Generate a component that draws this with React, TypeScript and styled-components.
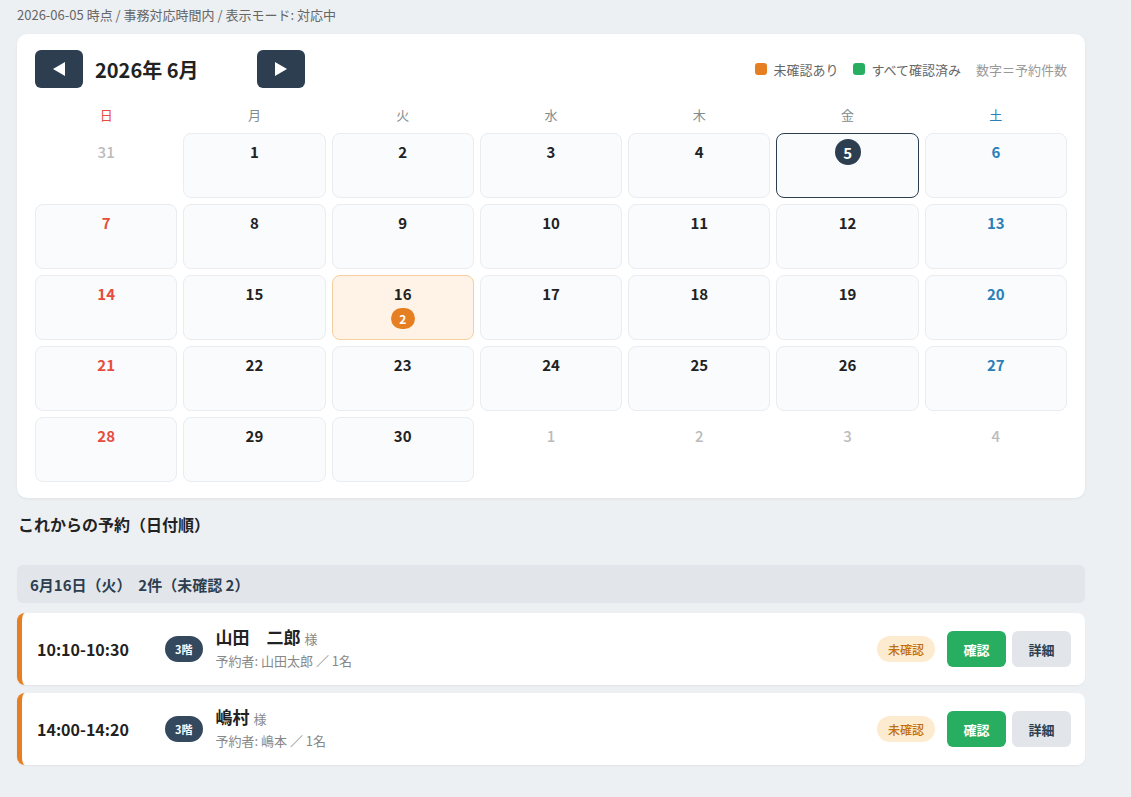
import styled, { createGlobalStyle, css } from "styled-components";

const GlobalStyle = createGlobalStyle`
    * { box-sizing: border-box; }
    body {
        margin: 0;
        background: #edf0f3;
        font-family: "Noto Sans CJK JP", "Noto Sans", sans-serif;
        color: #222;
    }
`;

const Page = styled.div`
    padding: 6px 46px 30px 17px;
`;

const StatusLine = styled.div`
    font-size: 13px;
    color: #666;
    line-height: 18px;
    margin-bottom: 10px;
`;

const CalendarCard = styled.section`
    background: #fff;
    border-radius: 10px;
    padding: 16px 18px;
    box-shadow: 0 1px 3px rgba(0, 0, 0, 0.06);
`;

const CalendarHeader = styled.div`
    display: flex;
    align-items: center;
    height: 38px;
`;

const NavButton = styled.button`
    width: 48px;
    height: 38px;
    border: none;
    border-radius: 6px;
    background: #2c3e50;
    display: flex;
    align-items: center;
    justify-content: center;
    cursor: pointer;
    padding: 0;
`;

const MonthTitle = styled.h2`
    margin: 0 12px;
    width: 150px;
    font-size: 20px;
    font-weight: 700;
    color: #222;
`;

const Legend = styled.div`
    margin-left: auto;
    display: flex;
    align-items: center;
    gap: 15px;
    font-size: 13px;
    color: #666;
`;

const LegendItem = styled.span`
    display: flex;
    align-items: center;
    gap: 6px;
`;

const Swatch = styled.span<{ $color: string }>`
    width: 12px;
    height: 12px;
    border-radius: 3px;
    background: ${(p) => p.$color};
`;

const LegendNote = styled.span`
    color: #999;
`;

const WeekRow = styled.div`
    display: grid;
    grid-template-columns: repeat(7, 1fr);
    gap: 6px;
    margin-top: 15px;
    margin-bottom: 6px;
`;

type Tone = "sun" | "sat" | "normal";

const toneColor = (t: Tone) => (t === "sun" ? "#e74c3c" : t === "sat" ? "#2980b9" : "#222");

const WeekLabel = styled.div<{ $tone: Tone }>`
    text-align: center;
    font-size: 13px;
    line-height: 24px;
    color: ${(p) => (p.$tone === "normal" ? "#7f8c8d" : toneColor(p.$tone))};
`;

const DayGrid = styled.div`
    display: grid;
    grid-template-columns: repeat(7, 1fr);
    grid-auto-rows: 65px;
    gap: 6px;
`;

const DayCell = styled.div<{ $outside?: boolean; $today?: boolean; $pending?: boolean }>`
    border-radius: 8px;
    border: 1px solid #e9edf1;
    background: #f9fbfd;
    display: flex;
    flex-direction: column;
    align-items: center;
    padding-top: 7px;
    gap: 3px;

    ${(p) =>
        p.$outside &&
        css`
            border-color: transparent;
            background: transparent;
        `}
    ${(p) =>
        p.$today &&
        css`
            border-color: #2c3e50;
        `}
    ${(p) =>
        p.$pending &&
        css`
            background: #fef3e6;
            border-color: #f5cf9f;
        `}
`;

const DayNumber = styled.span<{ $tone: Tone; $outside?: boolean }>`
    font-size: 15px;
    font-weight: 700;
    line-height: 22px;
    color: ${(p) => (p.$outside ? "#bbb" : toneColor(p.$tone))};
    ${(p) => p.$outside && css`font-weight: 500;`}
`;

const TodayNumber = styled.span`
    width: 26px;
    height: 26px;
    margin-top: -2px;
    border-radius: 50%;
    background: #2c3e50;
    color: #fff;
    font-size: 15px;
    font-weight: 700;
    display: flex;
    align-items: center;
    justify-content: center;
`;

const CountBadge = styled.span`
    min-width: 24px;
    height: 21px;
    border-radius: 11px;
    background: #e67e22;
    color: #fff;
    font-size: 12px;
    font-weight: 700;
    display: flex;
    align-items: center;
    justify-content: center;
`;

const SectionTitle = styled.h3`
    margin: 16px 0 31px 1px;
    font-size: 16px;
    line-height: 20px;
    font-weight: 700;
    color: #222;
`;

const GroupHeader = styled.div`
    height: 38px;
    background: #e2e6ea;
    border-radius: 6px;
    padding: 0 13px;
    display: flex;
    align-items: center;
    font-size: 15px;
    font-weight: 700;
    color: #2c3e50;
    margin-bottom: 10px;
`;

const ReservationList = styled.div`
    display: flex;
    flex-direction: column;
    gap: 8px;
`;

const ReservationRow = styled.div`
    height: 72px;
    background: #fff;
    border-radius: 8px;
    border-left: 5px solid #e67e22;
    padding: 0 14px 0 15px;
    display: flex;
    align-items: center;
    box-shadow: 0 1px 2px rgba(0, 0, 0, 0.05);
`;

const TimeText = styled.div`
    width: 128px;
    font-size: 16px;
    font-weight: 700;
    color: #222;
`;

const FloorBadge = styled.span`
    height: 26px;
    padding: 0 10px;
    border-radius: 13px;
    background: #34495e;
    color: #fff;
    font-size: 11px;
    font-weight: 700;
    display: flex;
    align-items: center;
    margin-right: 13px;
`;

const GuestInfo = styled.div`
    display: flex;
    flex-direction: column;
    gap: 2px;
    margin-top: -3px;
`;

const GuestName = styled.div`
    font-size: 17px;
    font-weight: 700;
    color: #222;
    line-height: 23px;
`;

const Honorific = styled.span`
    font-size: 13px;
    font-weight: 400;
    color: #888;
    margin-left: 4px;
`;

const GuestMeta = styled.div`
    font-size: 13px;
    color: #888;
    line-height: 18px;
`;

const Actions = styled.div`
    margin-left: auto;
    display: flex;
    align-items: center;
    gap: 6px;
`;

const StatusPill = styled.span`
    height: 26px;
    padding: 0 11px;
    border-radius: 13px;
    background: #fdebd0;
    color: #c0700f;
    font-size: 12px;
    font-weight: 500;
    display: flex;
    align-items: center;
    margin-right: 6px;
`;

const ActionButton = styled.button<{ $primary?: boolean }>`
    width: 59px;
    height: 36px;
    border: none;
    border-radius: 6px;
    font-family: inherit;
    font-size: 13px;
    font-weight: 700;
    cursor: pointer;
    background: ${(p) => (p.$primary ? "#27ae60" : "#e2e6ea")};
    color: ${(p) => (p.$primary ? "#fff" : "#2c3e50")};
`;

type Day = { n: number; outside?: boolean; today?: boolean; count?: number };

const days: Day[] = [
    { n: 31, outside: true },
    ...Array.from({ length: 30 }, (_, i) => ({
        n: i + 1,
        today: i + 1 === 5,
        count: i + 1 === 16 ? 2 : undefined,
    })),
    { n: 1, outside: true },
    { n: 2, outside: true },
    { n: 3, outside: true },
    { n: 4, outside: true },
];

const weekdays = ["日", "月", "火", "水", "木", "金", "土"];

const toneFor = (i: number): Tone => (i % 7 === 0 ? "sun" : i % 7 === 6 ? "sat" : "normal");

const reservations = [
    { time: "10:10-10:30", floor: "3階", name: "山田　二郎", meta: "予約者: 山田太郎 ／ 1名" },
    { time: "14:00-14:20", floor: "3階", name: "嶋村", meta: "予約者: 嶋本 ／ 1名" },
];

const Arrow = ({ dir }: { dir: "left" | "right" }) => (
    <svg width="14" height="16" viewBox="0 0 14 16">
        {dir === "left" ? <path d="M13 1 L1 8 L13 15 Z" fill="#fff" /> : <path d="M1 1 L13 8 L1 15 Z" fill="#fff" />}
    </svg>
);

const App = () => {
    return (
        <Page>
            <GlobalStyle />
            <StatusLine>2026-06-05 時点 / 事務対応時間内 / 表示モード: 対応中</StatusLine>
            <CalendarCard>
                <CalendarHeader>
                    <NavButton aria-label="前の月">
                        <Arrow dir="left" />
                    </NavButton>
                    <MonthTitle>2026年 6月</MonthTitle>
                    <NavButton aria-label="次の月">
                        <Arrow dir="right" />
                    </NavButton>
                    <Legend>
                        <LegendItem>
                            <Swatch $color="#e67e22" />
                            未確認あり
                        </LegendItem>
                        <LegendItem>
                            <Swatch $color="#27ae60" />
                            すべて確認済み
                        </LegendItem>
                        <LegendNote>数字＝予約件数</LegendNote>
                    </Legend>
                </CalendarHeader>
                <WeekRow>
                    {weekdays.map((w, i) => (
                        <WeekLabel key={w} $tone={toneFor(i)}>
                            {w}
                        </WeekLabel>
                    ))}
                </WeekRow>
                <DayGrid>
                    {days.map((d, i) => (
                        <DayCell key={i} $outside={d.outside} $today={d.today} $pending={!!d.count}>
                            {d.today ? (
                                <TodayNumber>{d.n}</TodayNumber>
                            ) : (
                                <DayNumber $tone={toneFor(i)} $outside={d.outside}>
                                    {d.n}
                                </DayNumber>
                            )}
                            {d.count && <CountBadge>{d.count}</CountBadge>}
                        </DayCell>
                    ))}
                </DayGrid>
            </CalendarCard>

            <SectionTitle>これからの予約（日付順）</SectionTitle>
            <GroupHeader>6月16日（火）&nbsp;&nbsp;2件（未確認 2）</GroupHeader>
            <ReservationList>
                {reservations.map((r) => (
                    <ReservationRow key={r.time}>
                        <TimeText>{r.time}</TimeText>
                        <FloorBadge>{r.floor}</FloorBadge>
                        <GuestInfo>
                            <GuestName>
                                {r.name}
                                <Honorific>様</Honorific>
                            </GuestName>
                            <GuestMeta>{r.meta}</GuestMeta>
                        </GuestInfo>
                        <Actions>
                            <StatusPill>未確認</StatusPill>
                            <ActionButton $primary>確認</ActionButton>
                            <ActionButton>詳細</ActionButton>
                        </Actions>
                    </ReservationRow>
                ))}
            </ReservationList>
        </Page>
    );
};

export default App;
